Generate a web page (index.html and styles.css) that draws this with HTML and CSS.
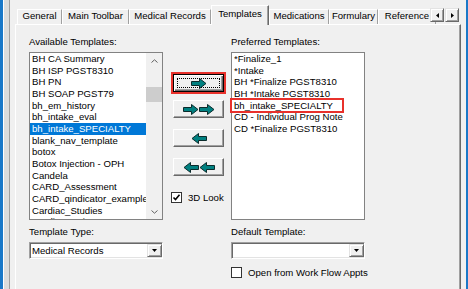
FILE: index.html
```html
<!DOCTYPE html>
<html lang="en">
<head>
  <meta charset="UTF-8" />
  <title>Templates</title>
  <link rel="stylesheet" href="styles.css">
</head>
<body>
  <div class="window">
    <div class="frame-edge"></div>
    <div class="client">
      <div class="tab-strip">
        <div class="tab t-general">General</div>
        <div class="tab t-toolbar">Main Toolbar</div>
        <div class="tab t-records">Medical Records</div>
        <div class="tab t-templates active">Templates</div>
        <div class="tab t-meds">Medications</div>
        <div class="tab t-formulary">Formulary</div>
        <div class="tab t-reference">Reference</div>
        <div class="tab-scroll">
          <div class="spin">
            <svg width="3" height="5" viewBox="0 0 3 5"><path d="M3 0V5L0 2.5Z" fill="#000"/></svg>
          </div>
          <div class="spin">
            <svg width="3" height="5" viewBox="0 0 3 5"><path d="M0 0V5L3 2.5Z" fill="#000"/></svg>
          </div>
        </div>
      </div>

      <div class="tab-page">
        <div class="col col-left">
          <div class="label">Available Templates:</div>
          <div class="listbox">
            <ul class="items">
              <li>BH CA Summary</li>
              <li>BH ISP PGST8310</li>
              <li>BH PN</li>
              <li>BH SOAP PGST79</li>
              <li>bh_em_history</li>
              <li>bh_intake_eval</li>
              <li class="selected">bh_intake_SPECIALTY</li>
              <li>blank_nav_template</li>
              <li>botox</li>
              <li>Botox Injection - OPH</li>
              <li>Candela</li>
              <li>CARD_Assessment</li>
              <li>CARD_qindicator_example</li>
              <li>Cardiac_Studies</li>
              <li>Cardiac_Units</li>
            </ul>
            <div class="vscroll">
              <div class="sb-btn">
                <svg width="7" height="4" viewBox="0 0 7 4"><path d="M0.5 3.5L3.5 0.8L6.5 3.5" fill="none" stroke="#606060" stroke-width="1"/></svg>
              </div>
              <div class="sb-track">
                <div class="sb-thumb"></div>
              </div>
              <div class="sb-btn">
                <svg width="7" height="4" viewBox="0 0 7 4"><path d="M0.5 0.5L3.5 3.2L6.5 0.5" fill="none" stroke="#606060" stroke-width="1"/></svg>
              </div>
            </div>
          </div>
          <div class="label label-gap">Template Type:</div>
          <div class="combo">
            <span class="combo-text">Medical Records</span>
            <span class="drop">
              <svg width="5" height="3" viewBox="0 0 5 3"><path d="M0 0H5L2.5 3Z" fill="#000"/></svg>
            </span>
          </div>
        </div>

        <div class="col col-mid">
          <div class="focus-frame">
            <div class="btn default">
              <svg width="16" height="11" viewBox="0 0 16 11"><path d="M0.5 3.5H8.5V0.5L15 5.5L8.5 10.5V7.5H0.5Z" fill="#008080" stroke="#0b2b2b"/></svg>
            </div>
          </div>
          <div class="btn">
            <svg width="32" height="11" viewBox="0 0 32 11">
              <path d="M0.5 3.5H8.5V0.5L15 5.5L8.5 10.5V7.5H0.5Z" fill="#008080" stroke="#0b2b2b"/>
              <path d="M16.5 3.5H24.5V0.5L31 5.5L24.5 10.5V7.5H16.5Z" fill="#008080" stroke="#0b2b2b"/>
            </svg>
          </div>
          <div class="btn">
            <svg width="16" height="11" viewBox="0 0 16 11"><path d="M15.5 3.5H7.5V0.5L1 5.5L7.5 10.5V7.5H15.5Z" fill="#008080" stroke="#0b2b2b"/></svg>
          </div>
          <div class="btn">
            <svg width="32" height="11" viewBox="0 0 32 11">
              <path d="M15.5 3.5H7.5V0.5L1 5.5L7.5 10.5V7.5H15.5Z" fill="#008080" stroke="#0b2b2b"/>
              <path d="M31.5 3.5H23.5V0.5L17 5.5L23.5 10.5V7.5H31.5Z" fill="#008080" stroke="#0b2b2b"/>
            </svg>
          </div>
          <div class="check-row look-row">
            <span class="check">
              <svg width="9" height="9" viewBox="0 0 9 9"><path d="M1.5 4.5L3.5 6.5L7.5 1.8" fill="none" stroke="#000" stroke-width="1.6"/></svg>
            </span>
            <span>3D Look</span>
          </div>
        </div>

        <div class="col col-right">
          <div class="label">Preferred Templates:</div>
          <div class="listbox">
            <ul class="items">
              <li>*Finalize_1</li>
              <li>*Intake</li>
              <li>BH *Finalize PGST8310</li>
              <li>BH *Intake PGST8310</li>
              <li>bh_intake_SPECIALTY</li>
              <li>CD - Individual Prog Note</li>
              <li>CD *Finalize PGST8310</li>
            </ul>
            <div class="mark"></div>
          </div>
          <div class="label label-gap">Default Template:</div>
          <div class="combo">
            <span class="combo-text"></span>
            <span class="drop">
              <svg width="5" height="3" viewBox="0 0 5 3"><path d="M0 0H5L2.5 3Z" fill="#000"/></svg>
            </span>
          </div>
          <div class="check-row flow-row">
            <span class="check"></span>
            <span>Open from Work Flow Appts</span>
          </div>
        </div>
      </div>
    </div>
  </div>
</body>
</html>
```

FILE: styles.css
```css
* {
  box-sizing: border-box;
}

html, body {
  margin: 0;
  padding: 0;
  width: 468px;
  height: 289px;
  overflow: hidden;
  background: #f0f0f0;
  font-family: 'Liberation Sans', Arial, sans-serif;
  font-size: 9.6px;
  color: #000;
}

.window {
  display: flex;
  height: 289px;
  border-left: 3px solid #1a78c8;
  border-right: 2px solid #1a78c8;
  overflow: hidden;
}

.frame-edge {
  flex: none;
  width: 7px;
  background: #dcdcdc;
  border-left: 1px solid #fff;
  border-right: 1px solid #a0a0a0;
}

.client {
  flex: 1;
  display: flex;
  flex-direction: column;
  padding: 0 5px;
}

/* tabs */
.tab-strip {
  position: relative;
  display: flex;
  align-items: flex-end;
  height: 24px;
  padding-left: 2px;
  flex: none;
}

.tab {
  flex: none;
  height: 15px;
  line-height: 12px;
  text-align: center;
  white-space: nowrap;
  overflow: hidden;
  border-top: 1px solid #fff;
  border-left: 1px solid #fff;
  border-right: 1px solid #a0a0a0;
}

.tab.active {
  position: relative;
  z-index: 1;
  height: 20px;
  padding-top: 2px;
  margin-bottom: -1px;
  background: #f0f0f0;
  border-right-color: #696969;
  box-shadow: inset -1px 0 #a0a0a0;
}

.t-general { width: 45px; }
.t-toolbar { width: 67px; }
.t-records { width: 82px; }
.t-templates { width: 58px; }
.t-meds { width: 60px; }
.t-formulary { width: 49px; }
.t-reference { width: 58px; }

.tab-scroll {
  position: absolute;
  left: 415px;
  top: 8px;
  z-index: 2;
  display: flex;
  gap: 1px;
  background: #f0f0f0;
}

.spin {
  width: 14px;
  height: 14px;
  display: flex;
  align-items: center;
  justify-content: center;
  background: #f0f0f0;
  border: 1px solid;
  border-color: #e3e3e3 #696969 #696969 #e3e3e3;
  box-shadow: inset 1px 1px #fff, inset -1px -1px #a0a0a0;
}

.tab-page {
  flex: 1;
  display: flex;
  min-height: 280px;
  padding: 11px 0 0 13px;
  border-top: 1px solid #fff;
  border-left: 1px solid #fff;
  border-right: 1px solid #696969;
  box-shadow: inset -1px 0 #a0a0a0;
}

/* columns */
.col {
  flex: none;
  display: flex;
  flex-direction: column;
}

.col-left { width: 134px; }
.col-mid { width: 55px; margin-left: 8px; }
.col-right { width: 134px; margin-left: 5px; }

.label {
  height: 12px;
  line-height: 12px;
  white-space: nowrap;
}

.label-gap {
  margin-top: 6px;
}

/* list boxes */
.listbox {
  position: relative;
  display: flex;
  height: 168px;
  margin-top: 4px;
  background: #fff;
  border: 1px solid #828282;
}

.items {
  flex: 1;
  min-width: 0;
  margin: 0;
  padding: 0;
  list-style: none;
  overflow: hidden;
}

.items li {
  height: 11.67px;
  line-height: 11.67px;
  padding-left: 2px;
  white-space: nowrap;
}

.items li.selected {
  background: #0078d7;
  color: #fff;
}

.vscroll {
  flex: none;
  width: 16px;
  display: flex;
  flex-direction: column;
  background: #f0f0f0;
}

.sb-btn {
  height: 15px;
  display: flex;
  align-items: center;
  justify-content: center;
}

.sb-track {
  flex: 1;
}

.sb-thumb {
  height: 15px;
  margin-top: 19px;
  background: #cdcdcd;
}

.mark {
  position: absolute;
  left: -2px;
  top: 45px;
  width: 114px;
  height: 15px;
  border: 2px solid #e8312b;
}

/* combo boxes */
.combo {
  display: flex;
  height: 17px;
  margin-top: 4px;
  padding: 1px 0 1px 1px;
  background: #fff;
  border: 1px solid;
  border-color: #a0a0a0 #fff #fff #a0a0a0;
  box-shadow: inset 1px 1px #696969, inset -1px -1px #e3e3e3;
}

.combo-text {
  flex: 1;
  padding-left: 1px;
  line-height: 13px;
  white-space: nowrap;
}

.drop {
  width: 15px;
  height: 13px;
  display: flex;
  align-items: center;
  justify-content: center;
  background: #f0f0f0;
  border: 1px solid;
  border-color: #e3e3e3 #696969 #696969 #e3e3e3;
  box-shadow: inset 1px 1px #fff, inset -1px -1px #a0a0a0;
}

/* buttons */
.focus-frame {
  width: 55px;
  height: 22px;
  margin-top: 36px;
  border: 2px solid #e8312b;
}

.btn {
  position: relative;
  width: 51px;
  height: 18px;
  margin: 11px 0 0 2px;
  display: flex;
  align-items: center;
  justify-content: center;
  background: #f0f0f0;
  border: 1px solid;
  border-color: #fff #696969 #696969 #fff;
  box-shadow: inset -1px -1px #a0a0a0;
}

.focus-frame + .btn {
  margin-top: 6px;
}

.btn.default {
  margin: 0;
  border-color: #000;
  box-shadow: inset 1px 1px #fff, inset -1px -1px #696969, inset -2px -2px #a0a0a0;
}

.btn.default::after {
  content: '';
  position: absolute;
  left: 3px;
  top: 3px;
  right: 3px;
  bottom: 3px;
  border: 1px dotted #000;
}

/* check boxes */
.check-row {
  display: flex;
  align-items: center;
  gap: 6px;
  height: 11px;
  white-space: nowrap;
}

.look-row { margin-top: 16px; }
.flow-row { margin-top: 8px; }

.check {
  flex: none;
  width: 11px;
  height: 11px;
  display: flex;
  align-items: center;
  justify-content: center;
  background: #fff;
  border: 1px solid #333;
}
```
